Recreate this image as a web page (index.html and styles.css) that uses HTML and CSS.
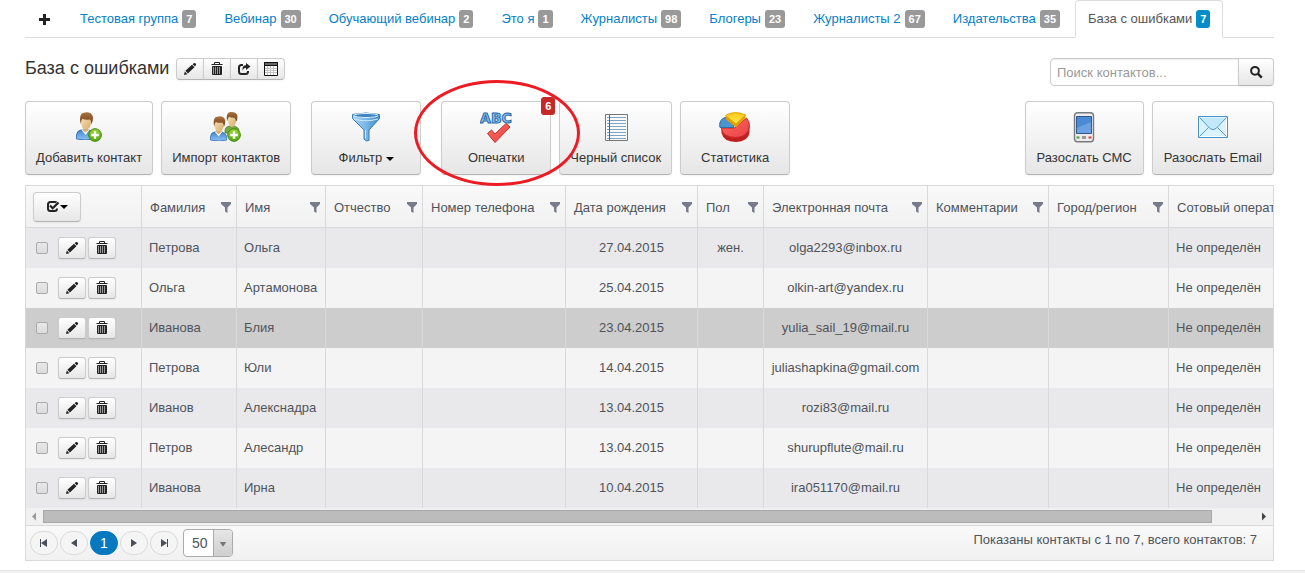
FILE: index.html
```html
<!DOCTYPE html>
<html lang="ru">
<head>
<meta charset="utf-8">
<title>База с ошибками</title>
<link rel="stylesheet" href="styles.css">
</head>
<body>
<svg class="sprite" aria-hidden="true">
  <defs>
    <linearGradient id="g-blue" x1="0" y1="0" x2="0" y2="1"><stop offset="0" stop-color="#3f86d0"/><stop offset="1" stop-color="#8fc3f5"/></linearGradient>
    <linearGradient id="g-green" x1="0" y1="0" x2="0" y2="1"><stop offset="0" stop-color="#9bd436"/><stop offset="1" stop-color="#55a80c"/></linearGradient>
    <linearGradient id="g-hair" x1="0" y1="0" x2="0" y2="1"><stop offset="0" stop-color="#a9713c"/><stop offset="1" stop-color="#6f4220"/></linearGradient>
    <linearGradient id="g-face" x1="0" y1="0" x2="1" y2="1"><stop offset="0" stop-color="#f8e2b4"/><stop offset="1" stop-color="#d6ab6c"/></linearGradient>
    <linearGradient id="g-funnel" x1="0" y1="0" x2="1" y2="0"><stop offset="0" stop-color="#a5d4f3"/><stop offset=".5" stop-color="#7ab8e6"/><stop offset="1" stop-color="#3f87c6"/></linearGradient>
    <linearGradient id="g-red" x1="0" y1="0" x2="1" y2="1"><stop offset="0" stop-color="#ff6b5c"/><stop offset="1" stop-color="#e8414a"/></linearGradient>
    <linearGradient id="g-yellow" x1="0" y1="0" x2="0" y2="1"><stop offset="0" stop-color="#ffc61a"/><stop offset="1" stop-color="#ffe94f"/></linearGradient>
  </defs>
  <symbol id="i-pencil" viewBox="0 0 14 14"><path fill="#222" d="M1 13l.8-3.400 2.600 2.600zM2.400 8.800l6.600-6 2.400 2.400-6.500 6.200zM9.600 2.200l1.200-1q.8-.6 1.600.1l.4.400q.7.800 0 1.600l-.9 1.200z"/></symbol>
  <symbol id="i-trash" viewBox="0 0 14 14"><path fill="none" stroke="#222" d="M4.500 2v-1.500h5V2M1.500 2.500h11"/><path fill="#999" stroke="#222" d="M2.500 4.500h9v8h-9z"/><path stroke="#222" d="M4.500 5v8M6.500 5v8M8.500 5v8M10.500 5v8"/></symbol>
  <symbol id="i-share" viewBox="0 0 14 14"><path fill="none" stroke="#222" stroke-width="2" d="M6 3H4.500Q2 3 2 5.500v4Q2 12 4.500 12h4Q11 12 11 9.500V9"/><path fill="#222" d="M9 1l4.500 3.500L9 8V5.800Q6.500 5.700 5.500 8.500 5 3.300 9 3.200z"/></symbol>
  <symbol id="i-grid" viewBox="0 0 16 16"><path fill="#fff" stroke="#111" d="M1.500 1.500h13v13h-13z"/><path fill="#666" stroke="#111" d="M1.500 1.500h13v3h-13z"/><path stroke="#c4c4c4" d="M4.500 5v9M7.500 5v9M10.500 5v9M2 7.500h12M2 9.500h12M2 11.500h12"/></symbol>
  <symbol id="i-search" viewBox="0 0 14 14"><circle cx="6" cy="5.800" r="3.900" fill="none" stroke="#222" stroke-width="2"/><path stroke="#222" stroke-width="2.400" d="M8.800 8.600l4 4"/></symbol>
  <symbol id="i-check" viewBox="0 0 14 14"><path fill="none" stroke="#222" stroke-width="2" d="M10.500 2.400Q10 2 9 2H4.500Q2 2 2 4.500v4Q2 11 4.500 11h4Q11 11 11 8.500"/><path fill="none" stroke="#222" stroke-width="2.200" d="M4 5.500l2.700 2.700L12.500 2.500"/></symbol>
  <symbol id="i-filter" viewBox="0 0 10 12"><path fill="#787c8a" d="M0 0h10v2L6.500 5.500V11L4 9.500v-4L0 2z"/></symbol>
  <symbol id="i-user" viewBox="0 0 20 28">
    <path fill="url(#g-blue)" stroke="#2565ad" stroke-width=".8" d="M.5 27v-4Q1 18.500 5 18h8q5 1 5.500 6v3Q10 29 .5 27z"/>
    <path fill="#fff" d="M5.500 17.800h8L9.500 23z"/>
    <path fill="#d9ad6c" d="M7 14h5v4.500l-2.500 2L7 18.500z"/>
    <ellipse cx="10" cy="11" rx="5" ry="6.500" fill="url(#g-face)"/>
    <path fill="url(#g-hair)" d="M4.600 12Q2.500 1.500 8 .7q7-1.500 8.800 3.800.7 4-1.300 8Q15 8.500 14 7.500q-5 .5-7.500-.8Q5 8.500 4.600 12z"/>
  </symbol>
  <symbol id="i-plus-ball" viewBox="0 0 14 14"><circle cx="7" cy="7" r="6.300" fill="url(#g-green)" stroke="#3b8508"/><path stroke="#fff" stroke-width="2.400" d="M7 3.200v7.600M3.200 7h7.600"/></symbol>
</svg>

<main class="page">
  <nav class="tabs" aria-label="Группы контактов">
    <a class="tab" href="#add" aria-label="Добавить группу"><svg class="icon" viewBox="0 0 14 14"><path stroke="#222" stroke-width="3" d="M6.500 2v11M1 7.500h11"/></svg></a>
    <a class="tab" href="#g1">Тестовая группа <span class="badge">7</span></a>
    <a class="tab" href="#g2">Вебинар <span class="badge">30</span></a>
    <a class="tab" href="#g3">Обучающий вебинар <span class="badge">2</span></a>
    <a class="tab" href="#g4">Это я <span class="badge">1</span></a>
    <a class="tab" href="#g5">Журналисты <span class="badge">98</span></a>
    <a class="tab" href="#g6">Блогеры <span class="badge">23</span></a>
    <a class="tab" href="#g7">Журналисты 2 <span class="badge">67</span></a>
    <a class="tab" href="#g8">Издательства <span class="badge">35</span></a>
    <a class="tab tab-active" href="#g9" aria-current="page">База с ошибками <span class="badge badge-info">7</span></a>
  </nav>

  <header class="heading">
    <h1 class="title">База с ошибками</h1>
    <div class="btn-group">
      <button class="btn btn-mini" aria-label="Переименовать"><svg class="icon"><use href="#i-pencil"/></svg></button>
      <button class="btn btn-mini" aria-label="Удалить"><svg class="icon"><use href="#i-trash"/></svg></button>
      <button class="btn btn-mini" aria-label="Экспорт"><svg class="icon"><use href="#i-share"/></svg></button>
      <button class="btn btn-mini" aria-label="Поля"><svg class="icon icon-grid"><use href="#i-grid"/></svg></button>
    </div>
    <form class="search">
      <input class="search-input" type="text" placeholder="Поиск контактов..." aria-label="Поиск контактов">
      <button class="btn search-btn" type="button" aria-label="Найти"><svg class="icon"><use href="#i-search"/></svg></button>
    </form>
  </header>

  <div class="toolbar">
    <div class="tools">
      <button class="btn tool"><svg class="tool-icon" viewBox="0 0 32 32"><use href="#i-user" x="3" y="0" width="20" height="28"/><use href="#i-plus-ball" x="15" y="16" width="14" height="14"/></svg><span>Добавить контакт</span></button>
      <button class="btn tool"><svg class="tool-icon" viewBox="0 0 32 32"><path fill="#75a843" stroke="#4f7d26" stroke-width=".8" d="M15 19q0-5 6-5 8 0 8 5v2H15z"/><ellipse cx="22" cy="9" rx="4" ry="6" fill="url(#g-face)"/><path fill="url(#g-hair)" d="M17 9Q15.500 0 21 0q6.500 0 6.500 4.800 0 3-1.500 5-.5-3-1.500-4-4 .2-5.500-1z"/><use href="#i-user" x="0" y="4" width="18" height="25"/><use href="#i-plus-ball" x="17" y="16" width="14" height="14"/></svg><span>Импорт контактов</span></button>
    </div>
    <div class="tools">
      <button class="btn tool"><svg class="tool-icon" viewBox="0 0 32 32"><path fill="url(#g-funnel)" stroke="#3b7bb4" d="M2.500 2.500Q16-.500 29.500 2.500v4L19 18v10.500q-3 1.500-5-1.500v-9L2.500 6.500z"/><ellipse cx="16" cy="3.500" rx="12" ry="2" fill="#3e81be" stroke="#d6edfc"/><path fill="none" stroke="#cfe9fa" d="M4 7q12 3.500 24 0M15.500 18v8.500"/></svg><span>Фильтр <i class="caret"></i></span></button>
    </div>
    <div class="tools tools-checks">
      <button class="btn tool tool-marked"><svg class="tool-icon" viewBox="0 0 32 32"><text class="abc" x="16" y="11" text-anchor="middle">ABC</text><path fill="url(#g-red)" stroke="#b8352d" d="M7.500 21.500l4-3.500 3.500 4 11-10.500 4 3.500L15 30.500z"/></svg><span>Опечатки</span><b class="badge badge-alert">6</b></button>
      <button class="btn tool"><svg class="tool-icon" viewBox="0 0 32 32"><path fill="#fafafa" stroke="#777" d="M5.500 2.500h22v26h-22z"/><path stroke="#7fa3c2" d="M7 5.500h19M7 8.500h19M7 11.500h19M7 14.500h19M7 17.500h19M7 20.500h19M7 23.500h19M7 26.500h19"/><path stroke="#c8342c" d="M9.500 3v25"/></svg><span>Черный список</span></button>
      <button class="btn tool"><svg class="tool-icon" viewBox="0 0 32 32"><path fill="#bf1f1f" d="M2.500 16v5q2 8.500 14 9 13-.5 14-10v-5z"/><path fill="url(#g-red)" stroke="#cf2424" d="M2.500 16H16L27.500 6q3 3.500 3 8-1 11-14 11.500Q3 25 2.500 16z"/><path fill="#4b94d0" stroke="#2e6da6" d="M.8 15v-4Q2 6.500 7.500 5L14.500 12.500v3H1z"/><path fill="#e39d00" d="M7 3.500v4l10 8 9.500-9.500V2.500z"/><path fill="url(#g-yellow)" stroke="#e6a400" d="M6.500 3.500Q15-2 26.500 3L17 12z"/></svg><span>Статистика</span></button>
    </div>
    <div class="tools tools-send">
      <button class="btn tool tool-compact"><svg class="tool-icon" viewBox="0 0 32 32"><rect x="6.500" y=".7" width="19" height="29" rx="3" fill="#ececee" stroke="#777b80" stroke-width="1.400"/><path fill="#4c8ad3" stroke="#31588d" d="M8.500 4.500h15v17h-15z"/><path fill="#6ca2e1" d="M9 16l14-6v11H9z"/><path fill="#4f9a35" d="M8.500 24.500h3v2h-3z"/><path fill="#999" d="M14 24h4v3h-4z"/><path fill="#da4038" d="M20.500 24.500h3v2h-3z"/></svg><span>Разослать СМС</span></button>
      <button class="btn tool tool-compact"><svg class="tool-icon" viewBox="0 0 32 32"><path fill="#d9f2fd" stroke="#4993c8" d="M1.500 4.500h29v21h-29z"/><path fill="none" stroke="#fff" d="M2.500 5.500h27v19h-27z"/><path fill="#c2e8fb" stroke="#5499c9" d="M2.500 5.500L13 16.500q3 2.500 6 0l10.500-11M2.500 24.500l9-9M29.500 24.500l-9-9"/></svg><span>Разослать Email</span></button>
    </div>
  </div>

  <section class="grid">
    <div class="grid-scroll">
      <table class="contacts">
        <colgroup><col class="c-tools"><col class="c-last"><col class="c-first"><col class="c-mid"><col class="c-phone"><col class="c-birth"><col class="c-sex"><col class="c-mail"><col class="c-note"><col class="c-city"><col class="c-oper"></colgroup>
        <thead>
          <tr>
            <th class="head-tools"><button class="btn btn-check" aria-label="Выбрать"><svg class="icon"><use href="#i-check"/></svg><i class="caret"></i></button></th>
            <th><div class="head">Фамилия<svg class="filter"><use href="#i-filter"/></svg></div></th>
            <th><div class="head">Имя<svg class="filter"><use href="#i-filter"/></svg></div></th>
            <th><div class="head">Отчество<svg class="filter"><use href="#i-filter"/></svg></div></th>
            <th><div class="head">Номер телефона<svg class="filter"><use href="#i-filter"/></svg></div></th>
            <th><div class="head">Дата рождения<svg class="filter"><use href="#i-filter"/></svg></div></th>
            <th><div class="head">Пол<svg class="filter"><use href="#i-filter"/></svg></div></th>
            <th><div class="head">Электронная почта<svg class="filter"><use href="#i-filter"/></svg></div></th>
            <th><div class="head">Комментарии<svg class="filter"><use href="#i-filter"/></svg></div></th>
            <th><div class="head">Город/регион<svg class="filter"><use href="#i-filter"/></svg></div></th>
            <th><div class="head">Сотовый оператор</div></th>
          </tr>
        </thead>
        <tbody>
          <tr>
            <td><div class="row-tools"><input class="box" type="checkbox" aria-label="Петрова Ольга"><div class="row-btns"><button class="btn btn-mini" aria-label="Изменить"><svg class="icon"><use href="#i-pencil"/></svg></button><button class="btn btn-mini" aria-label="Удалить"><svg class="icon"><use href="#i-trash"/></svg></button></div></div></td>
            <td>Петрова</td><td>Ольга</td><td></td><td></td><td class="mid">27.04.2015</td><td class="mid">жен.</td><td class="mid">olga2293@inbox.ru</td><td></td><td></td><td>Не определён</td>
          </tr>
          <tr>
            <td><div class="row-tools"><input class="box" type="checkbox" aria-label="Ольга Артамонова"><div class="row-btns"><button class="btn btn-mini" aria-label="Изменить"><svg class="icon"><use href="#i-pencil"/></svg></button><button class="btn btn-mini" aria-label="Удалить"><svg class="icon"><use href="#i-trash"/></svg></button></div></div></td>
            <td>Ольга</td><td>Артамонова</td><td></td><td></td><td class="mid">25.04.2015</td><td></td><td class="mid">olkin-art@yandex.ru</td><td></td><td></td><td>Не определён</td>
          </tr>
          <tr class="hovered">
            <td><div class="row-tools"><input class="box" type="checkbox" aria-label="Иванова Блия"><div class="row-btns"><button class="btn btn-mini" aria-label="Изменить"><svg class="icon"><use href="#i-pencil"/></svg></button><button class="btn btn-mini" aria-label="Удалить"><svg class="icon"><use href="#i-trash"/></svg></button></div></div></td>
            <td>Иванова</td><td>Блия</td><td></td><td></td><td class="mid">23.04.2015</td><td></td><td class="mid">yulia_sail_19@mail.ru</td><td></td><td></td><td>Не определён</td>
          </tr>
          <tr>
            <td><div class="row-tools"><input class="box" type="checkbox" aria-label="Петрова Юли"><div class="row-btns"><button class="btn btn-mini" aria-label="Изменить"><svg class="icon"><use href="#i-pencil"/></svg></button><button class="btn btn-mini" aria-label="Удалить"><svg class="icon"><use href="#i-trash"/></svg></button></div></div></td>
            <td>Петрова</td><td>Юли</td><td></td><td></td><td class="mid">14.04.2015</td><td></td><td class="mid">juliashapkina@gmail.com</td><td></td><td></td><td>Не определён</td>
          </tr>
          <tr>
            <td><div class="row-tools"><input class="box" type="checkbox" aria-label="Иванов Алекснадра"><div class="row-btns"><button class="btn btn-mini" aria-label="Изменить"><svg class="icon"><use href="#i-pencil"/></svg></button><button class="btn btn-mini" aria-label="Удалить"><svg class="icon"><use href="#i-trash"/></svg></button></div></div></td>
            <td>Иванов</td><td>Алекснадра</td><td></td><td></td><td class="mid">13.04.2015</td><td></td><td class="mid">rozi83@mail.ru</td><td></td><td></td><td>Не определён</td>
          </tr>
          <tr>
            <td><div class="row-tools"><input class="box" type="checkbox" aria-label="Петров Алесандр"><div class="row-btns"><button class="btn btn-mini" aria-label="Изменить"><svg class="icon"><use href="#i-pencil"/></svg></button><button class="btn btn-mini" aria-label="Удалить"><svg class="icon"><use href="#i-trash"/></svg></button></div></div></td>
            <td>Петров</td><td>Алесандр</td><td></td><td></td><td class="mid">13.04.2015</td><td></td><td class="mid">shurupflute@mail.ru</td><td></td><td></td><td>Не определён</td>
          </tr>
          <tr>
            <td><div class="row-tools"><input class="box" type="checkbox" aria-label="Иванова Ирна"><div class="row-btns"><button class="btn btn-mini" aria-label="Изменить"><svg class="icon"><use href="#i-pencil"/></svg></button><button class="btn btn-mini" aria-label="Удалить"><svg class="icon"><use href="#i-trash"/></svg></button></div></div></td>
            <td>Иванова</td><td>Ирна</td><td></td><td></td><td class="mid">10.04.2015</td><td></td><td class="mid">ira051170@mail.ru</td><td></td><td></td><td>Не определён</td>
          </tr>
        </tbody>
      </table>
    </div>
    <div class="hbar" aria-hidden="true">
      <svg class="hbar-arrow" viewBox="0 0 17 17"><path fill="#999" d="M6 8.500l4-4v8z"/></svg>
      <div class="hbar-track"><div class="hbar-thumb"></div></div>
      <svg class="hbar-arrow" viewBox="0 0 17 17"><path fill="#444" d="M10 8.500l-4-4v8z"/></svg>
    </div>
    <footer class="pager">
      <div class="pages">
        <button class="page-btn" aria-label="Первая"><svg class="page-icon" viewBox="0 0 10 10"><path fill="#4a4f5a" d="M1 1h1v8H1zM2 5l6-4v8z"/></svg></button>
        <button class="page-btn" aria-label="Предыдущая"><svg class="page-icon" viewBox="0 0 10 10"><path fill="#4a4f5a" d="M2 5l6-4v8z"/></svg></button>
        <button class="page-btn page-current">1</button>
        <button class="page-btn" aria-label="Следующая"><svg class="page-icon" viewBox="0 0 10 10"><path fill="#4a4f5a" d="M8 5L2 1v8z"/></svg></button>
        <button class="page-btn" aria-label="Последняя"><svg class="page-icon" viewBox="0 0 10 10"><path fill="#4a4f5a" d="M8 1h1v8H8zM8 5L2 1v8z"/></svg></button>
      </div>
      <div class="size">
        <select class="size-select" aria-label="Контактов на странице"><option>50</option><option>100</option></select>
        <svg class="size-arrow" viewBox="0 0 19 26"><path fill="#777" d="M6 12h7l-3.500 5z"/></svg>
      </div>
      <p class="summary">Показаны контакты с 1 по 7, всего контактов: 7</p>
    </footer>
  </section>
</main>
<div class="bottom"></div>
</body>
</html>
```
FILE: styles.css
```css
*, *::before, *::after { box-sizing: border-box; }

body {
  margin: 0;
  background: #fff;
  color: #333;
  font: 13px/20px "Liberation Sans", Arial, sans-serif;
  overflow: hidden;
}

button, input, select { font: inherit; color: inherit; margin: 0; }
h1, p { margin: 0; }

.sprite { position: absolute; width: 0; height: 0; }
.page { padding: 0 31px 0 25px; }
.icon { display: block; flex: none; width: 14px; height: 14px; }
.icon-grid { width: 16px; height: 16px; }

/* Tabs */
.tabs {
  display: flex;
  gap: 2px;
  border-bottom: 1px solid #ddd;
}
.tab {
  display: flex;
  align-items: center;
  gap: 4px;
  margin-bottom: -1px;
  padding: 8px 12px;
  border: 1px solid transparent;
  border-radius: 4px 4px 0 0;
  color: #0480c8;
  text-decoration: none;
  white-space: nowrap;
}
.tab-active {
  border-color: #ddd #ddd #fff;
  background: #fff;
  color: #555;
}
.badge {
  padding: 2px 4px;
  border-radius: 3px;
  background: #999;
  color: #fff;
  font-size: 11px;
  font-weight: bold;
  line-height: 14px;
}
.badge-info { background: #058dc7; }

/* Buttons */
.btn {
  display: flex;
  align-items: center;
  justify-content: center;
  padding: 0;
  border: 1px solid #ccc;
  border-bottom-color: #b3b3b3;
  border-radius: 4px;
  background: linear-gradient(#fff, #e6e6e6);
  box-shadow: 0 1px 2px rgba(0, 0, 0, .05);
}
.btn-mini { width: 28px; height: 22px; border-radius: 3px; }
.btn-group { display: flex; margin-top: 1px; }
.btn-group .btn { border-radius: 0; }
.btn-group .btn + .btn { margin-left: -1px; }
.btn-group .btn:first-child { border-radius: 4px 0 0 4px; }
.btn-group .btn:last-child { border-radius: 0 4px 4px 0; }
.caret {
  display: inline-block;
  border: 4px solid transparent;
  border-top-color: #000;
  border-bottom: 0;
  vertical-align: middle;
}

/* Heading */
.heading {
  display: flex;
  align-items: flex-start;
  gap: 7px;
  padding-top: 19px;
}
.title { font-size: 18px; font-weight: normal; line-height: 22px; }
.search { display: flex; margin: 1px 0 0 auto; }
.search-input {
  width: 189px;
  height: 28px;
  padding: 0 6px;
  border: 1px solid #ccc;
  border-radius: 4px 0 0 4px;
  box-shadow: inset 0 1px 1px rgba(0, 0, 0, .075);
}
.search-input::placeholder { color: #999; }
.search-btn { width: 36px; margin-left: -1px; border-radius: 0 4px 4px 0; }

/* Toolbar */
.toolbar { display: flex; gap: 20px; padding: 15px 0 10px; }
.tools { display: flex; gap: 8px; }
.tools-send { margin-left: auto; }
.tool {
  position: relative;
  flex-direction: column;
  gap: 4px;
  min-width: 110px;
  height: 74px;
  padding: 4px 10px 0;
  white-space: nowrap;
}
.tool-compact { padding: 4px 11px 0; }
.tool-icon { width: 32px; height: 32px; }
.abc {
  fill: #8fc6ee;
  stroke: #1f67a8;
  stroke-width: 1px;
  font: bold 14px "DejaVu Sans", sans-serif;
}
.badge-alert { position: absolute; top: -5px; right: -5px; background: #c62828; }
.tool-marked::after {
  content: "";
  position: absolute;
  z-index: 2;
  top: -22px;
  left: -28px;
  width: 166px;
  height: 106px;
  border: 3px solid #ed1c24;
  border-radius: 50%;
  pointer-events: none;
}
.tool-marked { z-index: 1; }

/* Contacts grid */
.grid { border: 1px solid #d9d9db; color: #4f535b; }
.grid-scroll { overflow: hidden; }
.contacts { width: 1293px; table-layout: fixed; border-collapse: separate; border-spacing: 0; }
.c-tools { width: 116px; }
.c-last { width: 95px; }
.c-first { width: 89px; }
.c-mid { width: 97px; }
.c-phone { width: 143px; }
.c-birth { width: 132px; }
.c-sex { width: 66px; }
.c-mail { width: 164px; }
.c-note { width: 121px; }
.c-city { width: 120px; }
.c-oper { width: 150px; }
.contacts th, .contacts td { border-right: 1px solid #d9d9db; white-space: nowrap; text-align: left; }
.contacts th {
  height: 42px;
  padding: 2px 5px 0 8px;
  border-bottom: 1px solid #d9d9db;
  background: linear-gradient(#f9f9f9, #f1f1f1);
  font-weight: normal;
}
.contacts td { height: 40px; padding: 0 7px; }
.contacts .mid { text-align: center; }
.contacts .head-tools { padding: 0 7px; }
.contacts tbody tr:nth-child(odd) { background: #e9e9eb; }
.contacts tbody tr:nth-child(even) { background: #f4f4f4; }
.contacts tbody tr.hovered:nth-child(n) { background: #cdcdcd; }
.head { display: flex; align-items: center; justify-content: space-between; }
.filter { flex: none; width: 10px; height: 12px; }
.btn-check { width: 48px; height: 30px; }
.row-tools { display: flex; align-items: center; gap: 10px; padding-left: 3px; }
.row-btns { display: flex; gap: 2px; }
.box {
  appearance: none;
  width: 12px;
  height: 12px;
  border: 1px solid #aaa;
  border-radius: 2px;
  background: linear-gradient(#e8e8e8, #dcdcdc);
}

/* Horizontal scroll bar */
.hbar { display: flex; align-items: center; height: 17px; background: #f1f1f1; }
.hbar-arrow { flex: none; width: 17px; height: 17px; }
.hbar-track { flex: 1; }
.hbar-thumb { width: 96.4%; height: 13px; border: 1px solid #a8a8a8; background: #bcbcbc; }

/* Pager */
.pager {
  display: flex;
  align-items: center;
  gap: 5px;
  height: 35px;
  padding: 0 16px 0 4px;
  border-top: 1px solid #d9d9db;
  background: linear-gradient(#f9f9f9, #f1f1f1);
}
.pages { display: flex; gap: 2px; }
.page-btn {
  display: flex;
  align-items: center;
  justify-content: center;
  width: 28px;
  height: 24px;
  padding: 0;
  border: 1px solid #dadadc;
  border-radius: 12px;
  background: #f5f5f5;
}
.page-icon { width: 10px; height: 10px; }
.page-current { border-color: #0779bf; background: #0779bf; color: #fff; font-size: 14px; }
.size {
  display: flex;
  position: relative;
  width: 50px;
  height: 28px;
  border: 1px solid #aaa;
  border-radius: 4px;
  background: #fff;
  overflow: hidden;
}
.size-select {
  appearance: none;
  width: 100%;
  padding: 0 8px;
  border: 0;
  background: none;
  font-size: 14px;
}
.size-arrow {
  position: absolute;
  top: 0;
  right: 0;
  width: 19px;
  height: 26px;
  border-left: 1px solid #aaa;
  background: linear-gradient(#e6e6e6, #cfcfcf);
  pointer-events: none;
}
.summary { margin: 0 0 6px auto; }

.bottom { height: 20px; margin-top: 9px; border-top: 1px solid #e5e5e5; background: #f2f2f2; }
```
